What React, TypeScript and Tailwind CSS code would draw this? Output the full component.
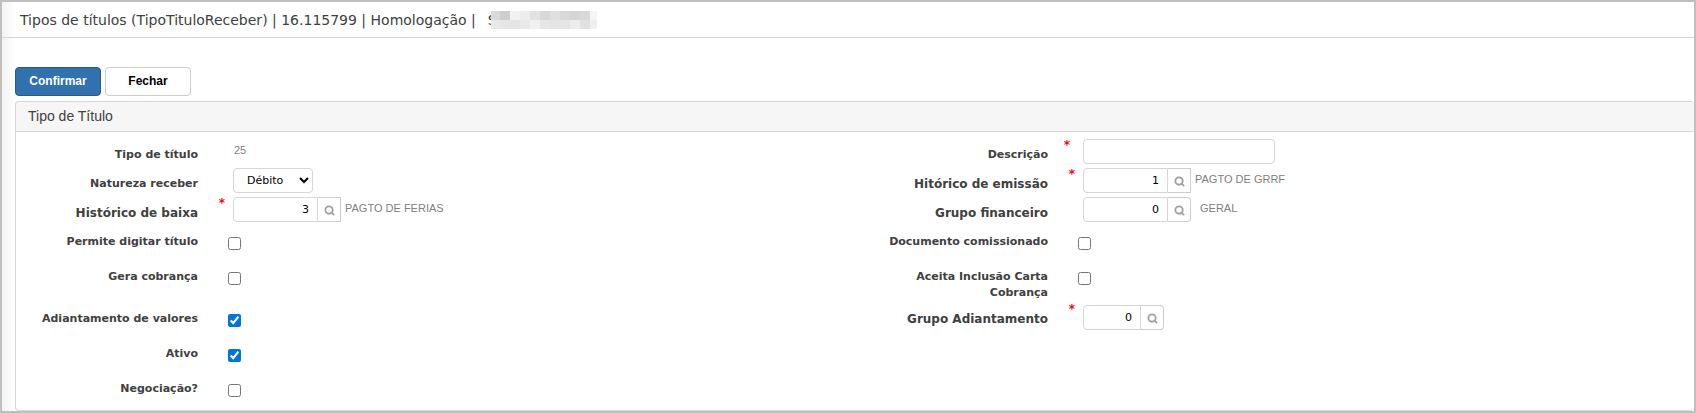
import { Search } from "lucide-react";
import type { ReactNode } from "react";

const mosaic = [
  ["#d9d9d9", "#cfcdcc", "#f1f2f4", "#ededed", "#e2e3df", "#d7d8da", "#dfdfdd", "#d8d8d8", "#d5d5d5", "#dbd9d8", "#f3f6f9"],
  ["#e8e8e9", "#e5e5e5", "#e4e4e4", "#e9e9e9", "#f0f0f0", "#e6e6e6", "#e4e4e4", "#e5e5e5", "#ececec", "#e1e1e1", "#efefef"],
];

function Mosaic() {
  return (
    <svg
      className="relative -ml-1.5"
      width="106"
      height="18"
      viewBox="0 0 106 18"
      shapeRendering="crispEdges"
      aria-hidden="true"
    >
      {mosaic.map((row, y) =>
        row.map((fill, x) => (
          <rect
            key={`${x}-${y}`}
            x={x === 0 ? 0 : x * 10 - 1}
            y={y * 9}
            width={x === 10 ? 7 : 10}
            height="9"
            fill={fill}
          />
        ))
      )}
    </svg>
  );
}

function Label({ id, large, children }: { id: string; large?: boolean; children: ReactNode }) {
  return (
    <label
      htmlFor={id}
      className={`w-[182px] shrink-0 pt-2 pl-4 text-right font-bold leading-4 text-[#404040] ${large ? "text-xs" : "text-[11px]"}`}
    >
      {children}
    </label>
  );
}

type FieldProps = {
  id: string;
  label: string;
  large?: boolean;
  required?: boolean;
  wideMark?: boolean;
  children: ReactNode;
};

function Field({ id, label, large, required, wideMark, children }: FieldProps) {
  return (
    <div className="flex items-start">
      <Label id={id} large={large}>{label}</Label>
      <span
        className={`w-[35px] shrink-0 text-right text-xs font-bold leading-3 text-[#f00] ${wideMark ? "pr-[13px]" : "pr-2"}`}
      >
        {required && "*"}
      </span>
      {children}
    </div>
  );
}

function CheckField({ id, label, checked }: { id: string; label: string; checked?: boolean }) {
  return (
    <div className="flex items-start">
      <Label id={id}>{label}</Label>
      <input
        id={id}
        type="checkbox"
        defaultChecked={checked}
        className="mt-[11px] ml-[30px] size-[13px] accent-[#0075d9]"
      />
    </div>
  );
}

type LookupProps = {
  id: string;
  value: string;
  text?: string;
  short?: boolean;
  square?: boolean;
};

function Lookup({ id, value, text, short, square }: LookupProps) {
  return (
    <div className="flex items-start">
      <input
        id={id}
        defaultValue={value}
        className={`h-[25px] rounded-l border border-[#d6d6d6] pr-2 text-right text-[11px] text-black ${short ? "w-[58px]" : "w-[85px]"}`}
      />
      <button
        type="button"
        aria-label="Pesquisar"
        className={`flex h-[25px] w-[23px] items-center justify-center border border-l-0 border-[#ccc] pt-0.5 ${square ? "" : "rounded-r"}`}
      >
        <Search className="size-[11px] text-[#a0a0a0]" strokeWidth={4} />
      </button>
      {text && (
        <span
          className={`pt-[3px] font-['Liberation_Sans',sans-serif] text-[11px] leading-4 text-[#808080] ${square ? "pl-1" : "pl-[9px]"}`}
        >
          {text}
        </span>
      )}
    </div>
  );
}

export default function App() {
  return (
    <div className="border-2 border-[#bfbfbf] bg-white font-['DejaVu_Sans',Verdana,sans-serif]">
      <header className="flex h-9 items-center border-b border-[#d6d6d6] bg-linear-to-r from-[#f2f2f2] to-white to-[14px] pl-[18px] text-sm text-[#404040]">
        <h1>Tipos de títulos (TipoTituloReceber) | 16.115799 | Homologação |</h1>
        <span className="ml-3">S</span>
        <Mosaic />
      </header>

      <main className="bg-linear-to-r from-[#f2f2f2] to-white to-[14px] pt-[29px] pl-[13px]">
        <div className="flex gap-1 font-['Liberation_Sans',sans-serif] text-xs font-bold">
          <button type="button" className="h-[29px] w-[86px] rounded border border-[#255a8b] bg-[#3071ae] pb-0.5 text-white">
            Confirmar
          </button>
          <button type="button" className="h-[29px] w-[86px] rounded border border-[#ccc] bg-white pb-0.5 text-black">
            Fechar
          </button>
        </div>

        <section className="mt-[5px] rounded border border-r-0 border-[#d6d6d6] bg-white">
          <h2 className="flex h-[30px] items-center rounded-t border-b border-[#d6d6d6] bg-[#f6f6f6] pb-0.5 pl-3 font-['Liberation_Sans',sans-serif] text-sm text-[#404040]">
            Tipo de Título
          </h2>

          <form className="pt-[7px] pb-0.5">
            <div className="grid h-[29px] grid-cols-[850fr_828fr]">
              <Field id="tipo" label="Tipo de título">
                <output id="tipo" className="pt-[3px] pl-px font-['Liberation_Sans',sans-serif] text-[11px] leading-4 text-[#808080]">
                  25
                </output>
              </Field>
              <Field id="descricao" label="Descrição" required wideMark>
                <input id="descricao" className="h-[25px] w-48 rounded border border-[#d6d6d6] px-2 text-[11px]" />
              </Field>
            </div>
            <div className="grid h-[29px] grid-cols-[850fr_828fr]">
              <Field id="natureza" label="Natureza receber">
                <select
                  id="natureza"
                  className="h-[25px] w-20 rounded border border-[#d6d6d6] bg-white pl-[9px] text-[11px] text-black"
                >
                  <option>Débito</option>
                  <option>Crédito</option>
                </select>
              </Field>
              <Field id="emissao" label="Hitórico de emissão" large required>
                <Lookup id="emissao" value="1" text="PAGTO DE GRRF" square />
              </Field>
            </div>
            <div className="grid h-[29px] grid-cols-[850fr_828fr]">
              <Field id="baixa" label="Histórico de baixa" large required>
                <Lookup id="baixa" value="3" text="PAGTO DE FERIAS" square />
              </Field>
              <Field id="financeiro" label="Grupo financeiro" large>
                <Lookup id="financeiro" value="0" text="GERAL" />
              </Field>
            </div>
            <div className="grid h-[35px] grid-cols-[850fr_828fr]">
              <CheckField id="digitar" label="Permite digitar título" />
              <CheckField id="comissionado" label="Documento comissionado" />
            </div>
            <div className="grid h-[42px] grid-cols-[850fr_828fr]">
              <CheckField id="cobranca" label="Gera cobrança" />
              <CheckField id="carta" label="Aceita Inclusão Carta Cobrança" />
            </div>
            <div className="grid h-[35px] grid-cols-[850fr_828fr]">
              <CheckField id="adiantamento" label="Adiantamento de valores" checked />
              <Field id="grupo" label="Grupo Adiantamento" large required>
                <div className="pt-0.5">
                  <Lookup id="grupo" value="0" short />
                </div>
              </Field>
            </div>
            <div className="grid h-[35px] grid-cols-[850fr_828fr]">
              <CheckField id="ativo" label="Ativo" checked />
            </div>
            <div className="grid h-[35px] grid-cols-[850fr_828fr]">
              <CheckField id="negociacao" label="Negociação?" />
            </div>
          </form>
        </section>
      </main>
    </div>
  );
}
